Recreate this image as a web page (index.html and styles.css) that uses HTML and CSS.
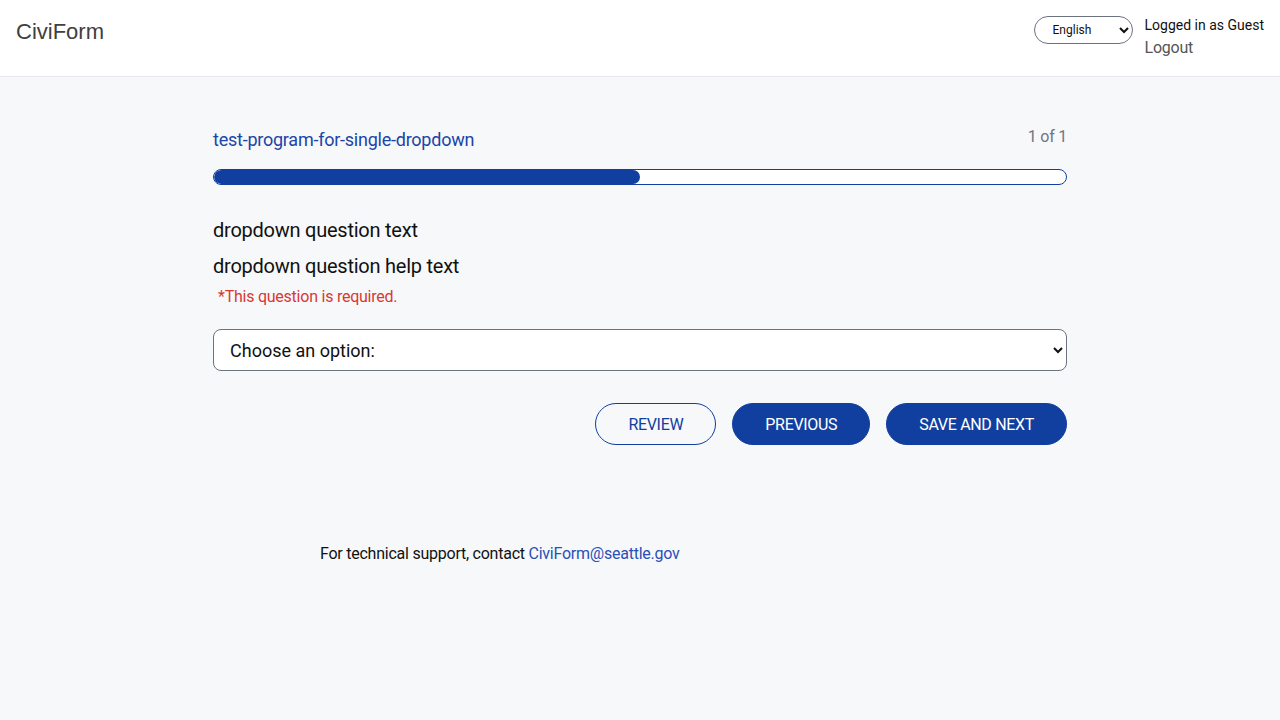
FILE: index.html
```html
<!DOCTYPE html>
<html lang="en">
<head>
<meta charset="utf-8">
<title>CiviForm</title>
<link rel="stylesheet" href="styles.css">
</head>
<body>
<header class="topbar">
  <div class="brand">CiviForm</div>
  <div class="account">
    <select class="lang-select">
      <option>English</option>
    </select>
    <div class="user">
      <div class="user-name">Logged in as Guest</div>
      <a class="logout" href="#">Logout</a>
    </div>
  </div>
</header>
<main class="main">
  <div class="content">
    <div class="program-head">
      <div class="program-title">test-program-for-single-dropdown</div>
      <div class="block-count">1 of 1</div>
    </div>
    <div class="progress"><div class="progress-fill" style="width:50%"></div></div>
    <div class="question">
      <div class="question-text">dropdown question text</div>
      <div class="question-help">dropdown question help text</div>
      <div class="required">*This question is required.</div>
      <select class="dropdown">
        <option>Choose an option:</option>
      </select>
    </div>
    <div class="actions">
      <button class="btn btn-outline">REVIEW</button>
      <button class="btn btn-solid">PREVIOUS</button>
      <button class="btn btn-solid">SAVE AND NEXT</button>
    </div>
  </div>
  <footer class="support">For technical support, contact <a href="#" class="support-link">CiviForm@seattle.gov</a></footer>
</main>
</body>
</html>
```

FILE: styles.css
```css
* { box-sizing: border-box; }
html, body {
  margin: 0;
  padding: 0;
  height: 100%;
}
body {
  background: #f7f8fa;
  font-family: Roboto, "Liberation Sans", Arial, sans-serif;
  letter-spacing: -0.015em;
  color: #111;
}
.topbar {
  height: 77px;
  background: #fff;
  border-bottom: 1px solid #e5e7eb;
  display: flex;
  justify-content: space-between;
  align-items: flex-start;
  padding: 0 16px;
}
.brand {
  font-family: "Liberation Sans", Arial, sans-serif;
  letter-spacing: 0;
  font-size: 22px;
  color: #404040;
  margin-top: 18px;
  line-height: 28px;
}
.account {
  display: flex;
  align-items: flex-start;
  gap: 12px;
  margin-top: 16px;
}
.lang-select {
  width: 99px;
  height: 28px;
  border: 1px solid #6b7280;
  border-radius: 14px;
  background: #fff;
  font-family: Roboto, "Liberation Sans", Arial, sans-serif;
  font-size: 12px;
  padding: 0 6px 0 14px;
  color: #111;
}
.user {
  display: flex;
  flex-direction: column;
}
.user-name {
  font-size: 14px;
  line-height: 18px;
  letter-spacing: 0;
  color: #111;
}
.logout {
  font-size: 16px;
  line-height: 28px;
  color: #555;
  text-decoration: none;
}
.main {
  padding-top: 50px;
}
.content {
  width: 854px;
  margin: 0 auto;
}
.program-head {
  display: flex;
  justify-content: space-between;
  align-items: flex-start;
}
.program-title {
  font-size: 18px;
  line-height: 24px;
  color: #1b45a8;
  margin-top: 1px;
}
.block-count {
  font-size: 16px;
  line-height: 20px;
  color: #71767f;
}
.progress {
  margin-top: 17px;
  height: 16px;
  border: 1px solid #113f9f;
  border-radius: 8px;
  background: #fff;
  overflow: hidden;
}
.progress-fill {
  height: 100%;
  background: #113f9f;
  border-radius: 8px;
}
.question {
  margin-top: 32px;
}
.question-text {
  font-size: 20px;
  line-height: 26px;
}
.question-help {
  font-size: 20px;
  line-height: 26px;
  margin-top: 10px;
}
.required {
  font-size: 16px;
  line-height: 22px;
  color: #d83933;
  padding-left: 5px;
  margin-top: 7px;
}
.dropdown {
  display: block;
  width: 100%;
  height: 42px;
  margin-top: 21px;
  border: 1px solid #6b7280;
  border-radius: 8px;
  background: #fff;
  font-family: Roboto, "Liberation Sans", Arial, sans-serif;
  font-size: 18px;
  color: #111;
  padding: 0 8px 0 12px;
}
.actions {
  display: flex;
  justify-content: flex-end;
  gap: 16px;
  margin-top: 32px;
}
.btn {
  height: 42px;
  border-radius: 21px;
  font-family: Roboto, "Liberation Sans", Arial, sans-serif;
  font-size: 16px;
  letter-spacing: -0.02em;
  padding: 0 32px;
  cursor: pointer;
}
.btn-outline {
  background: transparent;
  border: 1px solid #113f9f;
  color: #113f9f;
}
.btn-solid {
  background: #113f9f;
  border: 1px solid #113f9f;
  color: #fff;
}
.support {
  width: 854px;
  margin: 99px auto 0;
  padding-left: 107px;
  font-size: 16px;
  color: #111;
}
.support-link {
  color: #2a4fb8;
  text-decoration: none;
}
```
